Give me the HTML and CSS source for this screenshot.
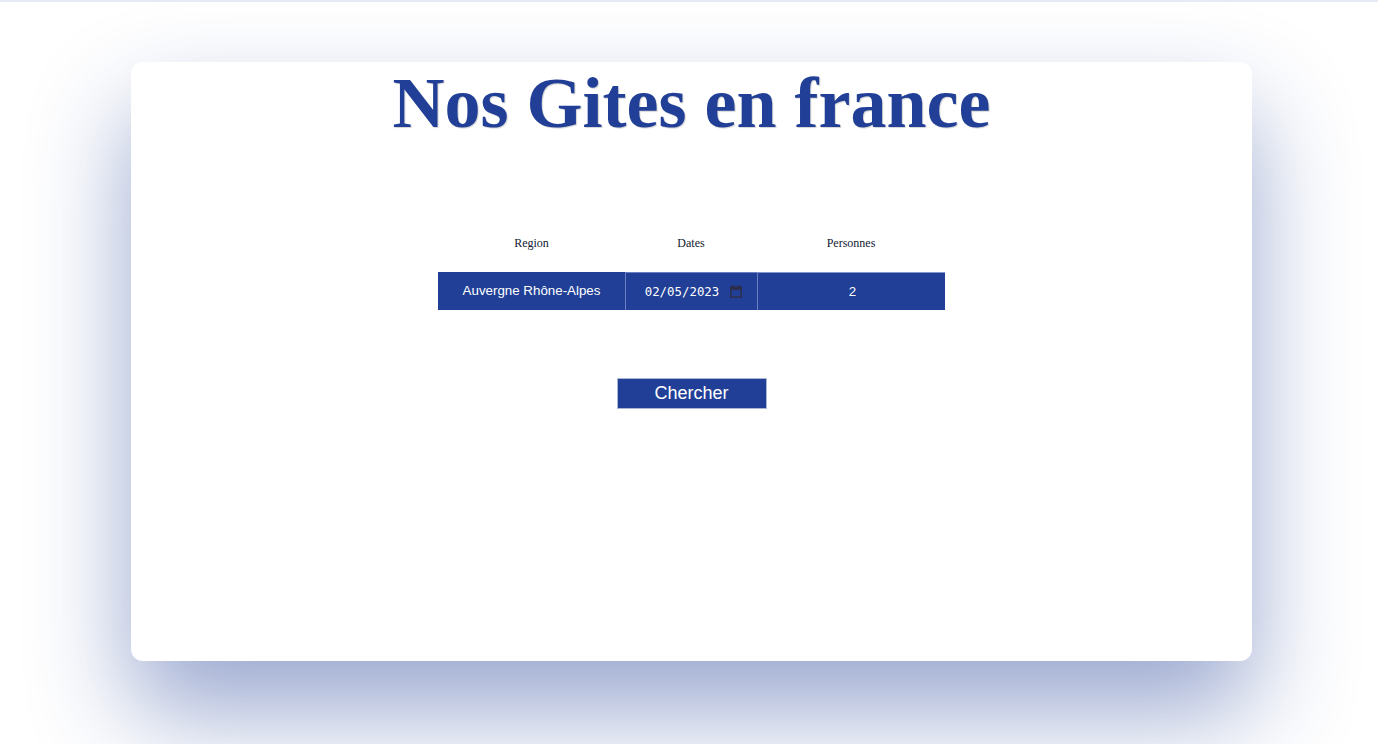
FILE: index.html
```html
<!DOCTYPE html>
<html lang="fr">
<head>
<meta charset="utf-8">
<title>Nos Gites en france</title>
<link rel="stylesheet" href="styles.css">
</head>
<body>
<div class="page">
  <main class="card">
    <h1 class="title">Nos Gites en france</h1>
    <form class="search">
      <div class="label">Region</div>
      <div class="label">Dates</div>
      <div class="label">Personnes</div>
      <div class="cell cell-region">Auvergne Rhône-Alpes</div>
      <div class="cell cell-date">
        <span class="date-text">02/05/2023</span>
        <svg class="cal" width="12" height="13" viewBox="0 0 12 13" aria-hidden="true">
          <rect x="2.5" y="0" width="1.5" height="3" fill="#2b2f4d"/>
          <rect x="8" y="0" width="1.5" height="3" fill="#2b2f4d"/>
          <rect x="0.75" y="2" width="10.5" height="10.25" fill="none" stroke="#2b2f4d" stroke-width="1.5"/>
          <rect x="0.75" y="2" width="10.5" height="3" fill="#2b2f4d"/>
        </svg>
      </div>
      <div class="cell cell-num">2</div>
    </form>
    <div class="actions">
      <button class="btn" type="button">Chercher</button>
    </div>
  </main>
</div>
</body>
</html>
```

FILE: styles.css
```css
html, body {
  margin: 0;
  padding: 0;
}
body {
  background: #ffffff;
  border-top: 2px solid #e6eaf5;
  min-height: 742px;
  overflow: hidden;
}
.page {
  padding-top: 60px;
  padding-left: 131px;
}
.card {
  width: 1121px;
  height: 599px;
  background: #ffffff;
  border-radius: 12px;
  box-shadow: 0 50px 100px rgba(33, 63, 150, 0.46);
  box-sizing: border-box;
}
.title {
  margin: 0;
  font-family: "Liberation Serif", "Times New Roman", serif;
  font-weight: bold;
  font-size: 72px;
  line-height: normal;
  color: #213f96;
  text-align: center;
  text-shadow: 1px 1px 1px rgba(0, 0, 0, 0.18);
}
.search {
  display: grid;
  grid-template-columns: 187px 132px 188px;
  width: 507px;
  margin: 91px auto 0;
  row-gap: 22px;
}
.label {
  font-family: "Liberation Serif", "Times New Roman", serif;
  font-size: 12px;
  line-height: 14px;
  color: #111a33;
  text-align: center;
}
.cell {
  height: 38px;
  background: #213f96;
  color: #ffffff;
  box-sizing: border-box;
  display: flex;
  align-items: center;
  justify-content: center;
  font-family: "Liberation Sans", Arial, sans-serif;
  font-size: 13.33px;
  padding-bottom: 1px;
}
.cell-date {
  border-left: 1px solid #6b80c2;
  border-top: 1px solid #6b80c2;
  gap: 11px;
  padding-left: 4px;
}
.cell-num {
  border-left: 1px solid #6b80c2;
  border-top: 1px solid #8596cc;
  padding-left: 2px;
}
.date-text {
  font-family: "DejaVu Sans Mono", "Liberation Mono", monospace;
  font-size: 12.4px;
  font-weight: 500;
}
.cal {
  display: block;
}
.actions {
  display: flex;
  justify-content: center;
  margin-top: 68px;
}
.btn {
  width: 150px;
  height: 31px;
  background: #213f96;
  color: #ffffff;
  border: 1px solid #aab5d6;
  font-family: "Liberation Sans", Arial, sans-serif;
  font-size: 18px;
  padding: 0;
  margin: 0;
}
```
